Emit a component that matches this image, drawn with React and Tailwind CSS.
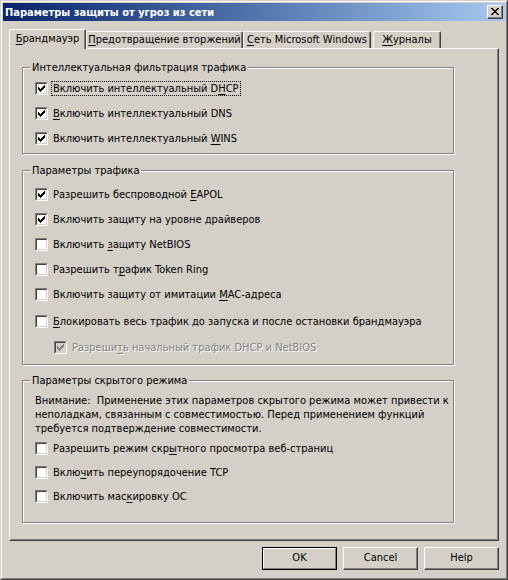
import React from 'react';

const FONT = "font-['DejaVu_Sans_Condensed','Liberation_Sans',sans-serif]";

const CHECK = [
  '......X',
  '.....XX',
  'X...XXX',
  'XX.XXX.',
  'XXXXX..',
  '.XXX...',
  '..X....',
];

const CLOSE = [
  'XX....XX',
  '.XX..XX.',
  '..XXXX..',
  '...XX...',
  '..XXXX..',
  '.XX..XX.',
  'XX....XX',
];

// small bitmap glyphs (check mark, close cross)
function Pixels({ rows, color }) {
  const w = rows[0].length;
  const h = rows.length;
  return (
    <svg width={w} height={h} viewBox={`0 0 ${w} ${h}`} shapeRendering="crispEdges" className="block">
      {rows.flatMap((r, y) =>
        [...r].map((c, x) =>
          c === 'X' ? <rect key={`${x}-${y}`} x={x} y={y} width="1" height="1" fill={color} /> : null
        )
      )}
    </svg>
  );
}

const U = ({ children }) => <span className="underline decoration-1 underline-offset-[2px]">{children}</span>;

function Box({ checked, disabled }) {
  return (
    <span className="flex h-[13px] w-[13px] shrink-0 border border-t-[#808080] border-l-[#808080] border-r-white border-b-white">
      <span
        className={`flex flex-1 items-center justify-center border border-t-[#404040] border-l-[#404040] border-r-[#d4d0c8] border-b-[#d4d0c8] ${
          disabled ? 'bg-[#d4d0c8]' : 'bg-white'
        }`}
      >
        {checked && <Pixels rows={CHECK} color={disabled ? '#808080' : '#000000'} />}
      </span>
    </span>
  );
}

function Check({ children, checked, focused, disabled, h = 'h-[25px]', indent }) {
  return (
    <div className={`flex items-center ${h} ${indent ? 'pl-[19px]' : ''}`}>
      <Box checked={checked} disabled={disabled} />
      <span
        className={`ml-[3px] border border-dotted px-[1px] leading-[13px] whitespace-nowrap ${
          focused ? 'border-black' : 'border-transparent'
        } ${disabled ? 'text-[#808080] [text-shadow:1px_1px_0_#ffffff]' : 'text-black'}`}
      >
        {children}
      </span>
    </div>
  );
}

function Group({ title, className, children }) {
  return (
    <div className={`relative ml-[12px] w-[432px] border border-[#808080] pl-[12px] shadow-[inset_1px_1px_0_#ffffff,1px_1px_0_#ffffff] ${className}`}>
      <div className="absolute -top-[7px] left-[7px] bg-[#d4d0c8] px-[2px] leading-[13px] whitespace-nowrap">{title}</div>
      {children}
    </div>
  );
}

function Tab({ children, active, className }) {
  if (active) {
    return (
      <div
        className={`relative z-10 -mb-px flex h-[20px] items-center justify-center rounded-t-[2px] border-t border-l border-r border-t-white border-l-white border-r-[#404040] bg-[#d4d0c8] shadow-[inset_-1px_0_0_#808080] ${className}`}
      >
        {children}
      </div>
    );
  }
  return (
    <div
      className={`flex h-[17px] items-center justify-center rounded-t-[2px] border-t border-l border-r border-t-white border-l-white border-r-[#404040] pt-[1px] shadow-[inset_-1px_0_0_#808080] ${className}`}
    >
      {children}
    </div>
  );
}

function Button({ children, isDefault }) {
  if (isDefault) {
    return (
      <div className="flex h-[23px] w-[75px] border border-black">
        <div className="flex flex-1 items-center justify-center border border-t-white border-l-white border-r-[#808080] border-b-[#808080]">
          {children}
        </div>
      </div>
    );
  }
  return (
    <div className="flex h-[23px] w-[75px] items-center justify-center border border-t-white border-l-white border-r-[#404040] border-b-[#404040] shadow-[inset_-1px_-1px_0_#808080]">
      {children}
    </div>
  );
}

export default function App() {
  return (
    <div className={`h-[580px] w-[508px] border border-t-[#d4d0c8] border-l-[#d4d0c8] border-r-[#404040] border-b-[#404040] bg-[#d4d0c8] text-[11px] text-black ${FONT}`}>
      <div className="flex h-full flex-col border border-t-white border-l-white border-r-[#808080] border-b-[#808080] p-px">
        {/* title bar */}
        <div className="flex h-[18px] shrink-0 items-center bg-linear-to-r from-[#0a246a] to-[#a6caf0] pl-[2px] pr-[2px]">
          <span className="flex-1 font-bold leading-[13px] text-white">Параметры защиты от угроз из сети</span>
          <div className="flex h-[14px] w-[16px] border border-t-white border-l-white border-r-[#404040] border-b-[#404040] bg-[#d4d0c8]">
            <div className="flex flex-1 items-start justify-start pl-[3px] pt-[2px] shadow-[inset_-1px_-1px_0_#808080]">
              <Pixels rows={CLOSE} color="#000000" />
            </div>
          </div>
        </div>

        {/* tabs */}
        <div className="ml-[6px] mt-[8px] flex h-[19px] items-end">
          <Tab active className="w-[77px]">
            <span><U>Б</U>рандмауэр</span>
          </Tab>
          <Tab className="w-[157px]">
            <span><U>П</U>редотвращение вторжений</span>
          </Tab>
          <Tab className="w-[128px]">
            <span><U>С</U>еть Microsoft Windows</span>
          </Tab>
          <Tab className="ml-[2px] w-[68px]">
            <span><U>Ж</U>урналы</span>
          </Tab>
        </div>

        {/* panel */}
        <div className="ml-[6px] h-[493px] w-[490px] border-t border-l border-r border-b border-t-white border-l-white border-r-[#404040] border-b-[#404040] pt-[18px] shadow-[inset_-1px_-1px_0_#808080]">
          <Group title="Интеллектуальная фильтрация трафика" className="pt-[8px] pb-[2px]">
            <Check checked focused>
              Включить интеллектуальный D<U>H</U>CP
            </Check>
            <Check checked>
              <U>В</U>ключить интеллектуальный DNS
            </Check>
            <Check checked>
              Включить интеллектуальный <U>W</U>INS
            </Check>
          </Group>

          <Group title="Параметры трафика" className="mt-[16px] pt-[11px] pb-[5px]">
            <Check checked>
              Разрешить беспроводной <U>E</U>APOL
            </Check>
            <Check checked>Включить защиту на уровне драйверов</Check>
            <Check>
              Включить <U>з</U>ащиту NetBIOS
            </Check>
            <Check>
              Разрешить т<U>р</U>афик Token Ring
            </Check>
            <Check>
              Включить защиту от имитации <U>M</U>AC-адреса
            </Check>
            <Check h="h-[28px]">
              <U>Б</U>локировать весь трафик до запуска и после остановки брандмауэра
            </Check>
            <Check checked disabled indent h="h-[24px]">
              Разреши<U>т</U>ь начальный трафик DHCP и NetBIOS
            </Check>
          </Group>

          <Group title="Параметры скрытого режима" className="mt-[15px] pt-[13px] pb-[14px]">
            <div className="leading-[14px] whitespace-pre">
              <div>Внимание:  Применение этих параметров скрытого режима может привести к</div>
              <div>неполадкам, связанным с совместимостью. Перед применением функций</div>
              <div>требуется подтверждение совместимости.</div>
            </div>
            <Check h="h-[24px]">
              Разрешить режим скр<U>ы</U>тного просмотра веб-страниц
            </Check>
            <Check h="h-[24px]">
              Вклю<U>ч</U>ить переупорядочение TCP
            </Check>
            <Check h="h-[24px]">
              Включить мас<U>к</U>ировку ОС
            </Check>
          </Group>
        </div>

        {/* buttons */}
        <div className="mt-[6px] flex justify-end gap-[6px] pr-[6px]">
          <Button isDefault>OK</Button>
          <Button>Cancel</Button>
          <Button>Help</Button>
        </div>
      </div>
    </div>
  );
}
